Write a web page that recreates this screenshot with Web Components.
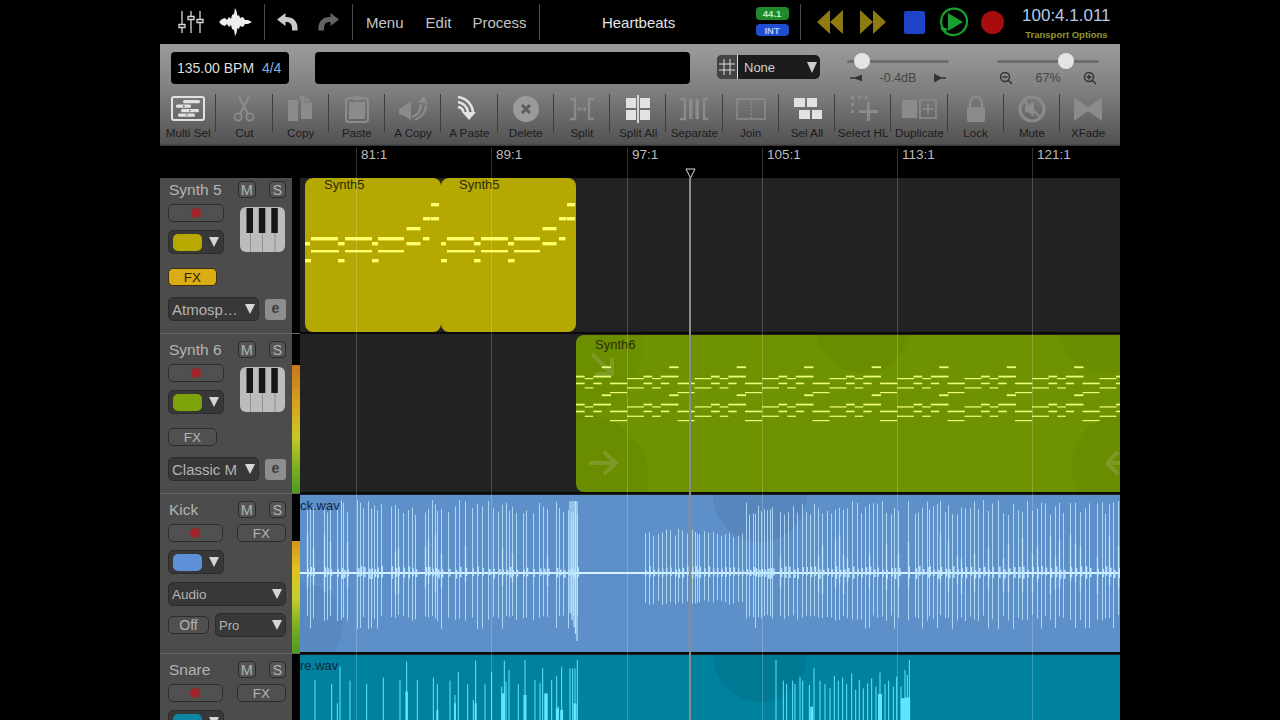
<!DOCTYPE html>
<html>
<head>
<meta charset="utf-8">
<title>Heartbeats</title>
<style>
  html, body { margin: 0; background: #000; height: 720px; overflow: hidden; }
  body { font-family: "Liberation Sans", Arial, sans-serif; }
</style>
</head>
<body>
<daw-app></daw-app>
<script>
// --- icons ---
const ICONS = {
  multi: `<rect x="4" y="2" width="32" height="23" rx="2" fill="none" stroke="currentColor" stroke-width="2"/><rect x="15" y="5" width="17" height="3.200" rx="1.500" fill="currentColor"/><rect x="8" y="9.500" width="15" height="3.200" rx="1.500" fill="currentColor"/><rect x="13" y="14" width="18" height="3.200" rx="1.500" fill="currentColor"/><rect x="10" y="18.500" width="17" height="3.200" rx="1.500" fill="currentColor"/><path d="M15 10.500h1.500v1.200H15zM21 15h1.500v1.200H21zM18 19.500h1.500v1.200H18z" fill="#555"/>`,
  cut: `<path d="M15 2l9 17M25 2l-9 17" stroke="currentColor" stroke-width="2.200" fill="none"/><circle cx="14" cy="22" r="3.600" fill="none" stroke="currentColor" stroke-width="1.800"/><circle cx="26" cy="22" r="3.600" fill="none" stroke="currentColor" stroke-width="1.800"/>`,
  copy: `<path d="M7 5h10v21H7z" fill="currentColor"/><path d="M18 1h6l7 6v17H20V5l-2-2z" fill="currentColor"/><path d="M24 1v6h7" fill="none" stroke="#777" stroke-width="1"/>`,
  paste: `<rect x="9" y="3" width="22" height="24" rx="3" fill="none" stroke="currentColor" stroke-width="2"/><rect x="12" y="7" width="16" height="17" fill="currentColor"/><rect x="16" y="1" width="8" height="4" rx="1" fill="currentColor"/>`,
  acopy: `<path d="M6 14l6-4 6-4v19l-6-4-6-2z" fill="currentColor"/><path d="M19 22c6-2 9-7 9-13M22 25c7-3 11-9 11-15" fill="none" stroke="currentColor" stroke-width="2.400"/><path d="M25 7l6-6 4 8z" fill="currentColor"/>`,
  apaste: `<path d="M9 2c8 1 14 7 15 15M9 7c5 1 9 4 10 10M9 12c3 .5 5 2 5.500 5" fill="none" stroke="currentColor" stroke-width="2.600"/><path d="M13 17h14l-7 8z" fill="currentColor"/>`,
  del: `<circle cx="20" cy="14" r="13" fill="currentColor"/><path d="M16 10l8 8M24 10l-8 8" stroke="#5c5c5c" stroke-width="3"/>`,
  split: `<path d="M8 4h5v20H8M32 4h-5v20h5" fill="none" stroke="currentColor" stroke-width="2.400"/><path d="M16 14h8M16 14l2-2M16 14l2 2M24 14l-2-2M24 14l-2 2" stroke="currentColor" stroke-width="1.200" fill="none"/>`,
  splitall: `<rect x="8" y="3" width="10" height="10" fill="currentColor"/><rect x="22" y="3" width="10" height="10" fill="currentColor"/><rect x="8" y="15" width="10" height="10" fill="currentColor"/><rect x="22" y="15" width="10" height="10" fill="currentColor"/><rect x="19.200" y="0" width="1.600" height="28" fill="#f0f0f0"/>`,
  separate: `<path d="M6 4h5v20H6M34 4h-4v20h4" fill="none" stroke="currentColor" stroke-width="2.400"/><rect x="15" y="4" width="3.500" height="20" fill="currentColor"/><rect x="21.500" y="4" width="3.500" height="20" fill="currentColor"/>`,
  join: `<rect x="6" y="4" width="28" height="20" fill="none" stroke="currentColor" stroke-width="1.600"/><path d="M20 4v20" stroke="currentColor" stroke-width="1.600" stroke-dasharray="2 1.500"/>`,
  selall: `<rect x="7" y="3" width="11" height="9" fill="currentColor"/><rect x="20" y="3" width="10" height="9" fill="currentColor"/><rect x="12" y="15" width="11" height="9" fill="currentColor"/><rect x="25" y="15" width="10" height="9" fill="currentColor"/>`,
  selhl: `<path d="M8 1h3v3H8zM15 1h3v3h-3zM22 1h3v3h-3zM8 8h3v3H8zM8 15h3v3H8z" fill="currentColor"/><path d="M24 7h3v8h8v3h-8v8h-3v-8h-8v-3h8z" fill="currentColor"/>`,
  dup: `<rect x="3" y="5" width="15" height="18" fill="currentColor"/><rect x="21" y="5" width="16" height="18" fill="none" stroke="currentColor" stroke-width="1.600"/><path d="M29 9v10M24 14h10" stroke="currentColor" stroke-width="1.600"/>`,
  lock: `<rect x="11" y="12" width="18" height="15" rx="2" fill="currentColor"/><path d="M14 13V8a6 6 0 0 1 12 0v5" fill="none" stroke="currentColor" stroke-width="2.400"/>`,
  mute: `<circle cx="20" cy="14" r="12" fill="none" stroke="currentColor" stroke-width="3.200"/><path d="M13 11h3l6-5v16l-6-5h-3z" fill="currentColor"/><path d="M12 6l16 16" stroke="currentColor" stroke-width="2.400"/>`,
  xfade: `<path d="M6 2l14 10 14-10v24L20 16 6 26z" fill="currentColor"/>`
};

// --- midi note patterns: [x, y, width, height] inside the clip ---
const synth5 = [];
[[0,5],[33,6.500],[67,6],[101.500,14]].forEach(n => synth5.push([n[0], 64, n[1], 3.400]));
[[6,27],[40,27],[73,26],[118,6.500]].forEach(n => synth5.push([n[0], 59, n[1], 3.400]));
[[6,28],[40,27],[73,26]].forEach(n => synth5.push([n[0], 72, n[1], 2.400]));
[[0,6],[33,6.500],[67,6.500]].forEach(n => synth5.push([n[0], 81, n[1], 3.400]));
synth5.push([101.500, 49, 14, 3.400], [118, 39, 7.500, 3.400], [126, 39, 8, 3.400], [126, 25, 8, 3.400]);

const synth6 = [];
const s6rows = [
  [109, 95, 123, 1.800], [137, 18, 44, 1.800], [137, 70, 123, 1.800], [144, 44, 70, 1.200], [144, 171, 222, 1.200],
  [158, 18, 44, 1.600], [158, 70, 95, 1.600], [158, 120, 172, 1.600], [172, 44, 70, 1.200], [172, 171, 222, 1.200],
  [186, 120, 171, 1.200], [193, 95, 123, 1.800], [221, 18, 44, 1.800], [221, 70, 123, 1.800], [229, 44, 70, 1.200],
  [229, 171, 222, 1.200], [242, 18, 44, 1.600], [242, 70, 95, 1.600], [242, 120, 172, 1.600], [257, 44, 70, 1.200],
  [257, 171, 222, 1.200], [270, 120, 171, 1.200]
];
for (let p = 0; p < 9; p++) {
  s6rows.forEach(r => synth6.push([(r[1] - 18) / 3 + p * 67.5, r[0] / 3 - 5, (r[2] - r[1]) / 3, r[3]]));
}
const PATTERNS = { synth5, synth6 };

// --- waveform data, spike positions read off the picture ---
const rnd = i => { const v = Math.sin(i * 12.9898) * 43758.5453; return v - Math.floor(v); };
const kickTall = [20,30,38,72,80,90,110,122,130,140,172,180,190,205,212,222,230,242,272,285,293,308,323,335,345,375,385,395,405,412,423,445,465,478,495,515,530,545,565,578,595,605,618,628,635,648,668,678,698,718,730,742,768,778,790,805,812,820,830].map(z => 300 + z / 3);
const kickShort = [1035,1047,1060,1073,1085,1097,1110,1125,1135,1147,1160,1175,1190].map(z => 300 + z / 3)
  .concat([15,28,42,55,68,80,93,105,118,130,143,155].map(z => 690 + z / 3));
const kickRight = [168,178,188,195,205,213,222,232,240,247,270,283,295,310,320,335,347,360,372,385,397,410,422,435,447,460,472,487,500,512,525,537,550,560,575,587,602,612,625,653,675,685,697,710,716,728,742,750,765,775,787,800,812,825,840,852,865,880,893,905,925,940,955,970,985,997,1010,1025,1040,1052,1065,1080,1095,1108,1120,1140,1155,1170,1185,1198,1220,1235,1245,1258,1270,1285].map(z => 690 + z / 3);

function kickLines() {
  const cy = 78, out = [];
  const add = (x, up, down, w, o) => out.push(`<line x1="${x - 300}" x2="${x - 300}" y1="${cy - up}" y2="${cy + down}" stroke-width="${w}" opacity="${o}"/>`);
  kickTall.concat(kickRight).forEach((x, i) => {
    const big = rnd(i) > 0.8;
    add(Math.round(x) + .5, 58 + rnd(i + 3) * 15, big ? 50 + rnd(i) * 6 : 42 + rnd(i + 7) * 6, 1, .8);
    if (rnd(i + 11) > .7) add(Math.round(x) + .5, 14 + rnd(i + 13) * 26, 8 + rnd(i + 17) * 14, 1.300, 1);
    add(x + 1.500, 3 + rnd(i + 19) * 4, 2 + rnd(i + 23) * 4, 1.500, 1);
  });
  kickShort.forEach((x, i) => {
    add(Math.round(x) + .5, 36 + rnd(i + 5) * 8, 27 + rnd(i + 9) * 5, 1, .8);
    add(x + 1, 3 + rnd(i) * 4, 2 + rnd(i + 2) * 3, 1.500, 1);
  });
  [570, 572, 574, 575.500, 577].forEach((x, i) => add(x, 72, 40 + i * 7, 1.200, .95));
  return out.join('');
}

const snareLeft = [[45,570],[95,582],[112,640],[120,530],[150,572],[200,582],[250,563],[300,570],[320,515],[352,570],[400,563],[412,583],[450,572],[465,615],[475,545],[503,583],[520,630],[527,512],[555,583],[575,545],[605,590],[613,512],[618,575],[627,540],[655,583],[675,510],[705,570],[720,580],[728,535],[755,570],[770,558],[775,650],[785,530],[810,535],[818,535],[825,535],[832,510]];
const snareRight = [[258,510],[280,572],[290,582],[308,572],[315,582],[330,560],[338,572],[358,585],[372,535],[390,572],[405,582],[420,595],[433,558],[445,572],[458,563],[470,582],[485,550],[497,600],[508,570],[520,595],[533,580],[545,565],[558,590],[570,547],[585,582],[596,572],[610,590],[620,560],[633,590],[645,540],[652,555],[658,510]];
const snareThick = [[320,605,0,2.500],[412,660,0,2],[465,640,0,2],[527,640,0,2],[610,610,0,3],[675,615,0,3],[738,610,0,3.500],[772,655,0,3],[785,660,0,3],[825,640,0,3],[365,650,1,3],[570,612,1,4],[637,625,1,3],[645,625,1,6],[653,622,1,5]];

function snareLines() {
  const out = [];
  const y = zy => 490 + zy / 3 - 655;
  snareLeft.forEach(s => out.push(`<line x1="${s[0] / 3}" x2="${s[0] / 3}" y1="${y(s[1])}" y2="80" stroke-width="1"/>`));
  snareRight.forEach(s => { const x = 390 + s[0] / 3; out.push(`<line x1="${x}" x2="${x}" y1="${y(s[1])}" y2="80" stroke-width="1"/>`); });
  snareThick.forEach(s => { const x = s[2] ? 390 + s[0] / 3 : s[0] / 3; out.push(`<line x1="${x}" x2="${x}" y1="${y(s[1])}" y2="80" stroke-width="${s[3]}"/>`); });
  return out.join('');
}

// --- components ---
class TopBar extends HTMLElement {
  connectedCallback() {
    this.attachShadow({ mode: 'open' });
    this.shadowRoot.innerHTML = `
      <style>
        :host { display: flex; align-items: center; height: 44px; background: #000; color: #c4c4c4; font-size: 15px; padding-left: 18px; box-sizing: border-box; }
        svg { display: block; flex: none; }
        .sep { width: 1px; height: 36px; background: #4a4a4a; flex: none; }
        .menu { flex: none; }
        .title { width: 200px; text-align: center; color: #e2e2e2; flex: none; margin-left: -1px; }
        .badges { display: flex; flex-direction: column; gap: 4px; margin: -1px 0 0 17px; flex: none; }
        .badge { width: 33px; height: 12.500px; border-radius: 4px; font-size: 9.500px; font-weight: bold; text-align: center; line-height: 13px; }
        .sr { background: #1e8a2c; color: #bfe8c0; }
        .int { background: #1f4fd0; color: #b8c8f0; }
        .time { margin-left: 15px; display: flex; flex-direction: column; align-items: flex-end; width: 92px; flex: none; margin-top: 1px; }
        .clock { font-size: 17px; color: #b4cbe6; line-height: 19px; white-space: nowrap; }
        .opts { font-size: 9.500px; font-weight: bold; color: #94962c; margin-top: 4px; white-space: nowrap; margin-right: 3px; }
      </style>
      <svg width="26" height="24" viewBox="0 0 26 24" fill="none" stroke="#d8d8d8" stroke-width="1.300">
        <path d="M4 1v22M13 1v22M22 1v22"/>
        <path d="M1 14.500h6v3H1zM10 6.500h6v3h-6zM19 9.500h6v3h-6z" fill="#000"/>
      </svg>
      <svg style="margin-left:15px" width="33" height="30" viewBox="0 0 33 30">
        <path d="M0 15 L3 12 L6 11 L8 13 L10 10 L12 12 L13 8 L15 7 L16 1 L17.500 4 L18.500 9 L20 8 L21 11 L24 10 L26 13 L29 13 L33 15 L29 17 L26 17 L24 20 L21 19 L20 22 L18.500 21 L17.500 26 L16 29 L15 23 L13 22 L12 18 L10 20 L8 17 L6 19 L3 18Z" fill="#eee"/>
      </svg>
      <div class="sep" style="margin-left:12px"></div>
      <svg style="margin-left:12px" width="21" height="18" viewBox="0 0 21 18"><path d="M8.500 0 L0 6.500 L8.500 13 V9 C13 8.500 15.500 11 15 17.500 H20.500 C21.500 8 15.500 3.500 8.500 4Z" fill="#c8c8c8"/></svg>
      <svg style="margin-left:20px" width="21" height="18" viewBox="0 0 21 18"><path d="M12.500 0 L21 6.500 L12.500 13 V9 C8 8.500 5.500 11 6 17.500 H.5 C-.5 8 5.500 3.500 12.500 4Z" fill="#636363"/></svg>
      <div class="sep" style="margin-left:13px"></div>
      <div class="menu" style="margin-left:13px">Menu</div>
      <div class="menu" style="margin-left:22px">Edit</div>
      <div class="menu" style="margin-left:21px">Process</div>
      <div class="sep" style="margin-left:12px"></div>
      <div class="title">Heartbeats</div>
      <div class="badges"><div class="badge sr">44.1</div><div class="badge int">INT</div></div>
      <div class="sep" style="margin-left:11px"></div>
      <svg style="margin-left:16px" width="26" height="24" viewBox="0 0 26 24" fill="#8f7a12"><path d="M13 0v24L0 12zM26 0v24L13 12z"/></svg>
      <svg style="margin-left:17px" width="26" height="24" viewBox="0 0 26 24" fill="#8f7a12"><path d="M0 0v24l13-12zM13 0v24l13-12z"/></svg>
      <div style="margin-left:18px;width:21px;height:23px;background:#1d44c6;border-radius:2px;flex:none"></div>
      <svg style="margin-left:12px" width="33" height="32" viewBox="0 0 33 32">
        <path d="M7 24A13.500 13.500 0 0 1 6 8.500 A13.500 13.500 0 0 1 27 7 A13.500 13.500 0 0 1 25 26 A13.500 13.500 0 0 1 9 27" fill="none" stroke="#17a02f" stroke-width="2.200"/>
        <path d="M11 7l15 9-15 9z" fill="#17a02f"/><path d="M3 22l7 0-1 7z" fill="#17a02f"/>
      </svg>
      <div style="margin-left:11px;width:23px;height:23px;background:#a80c0c;border-radius:50%;flex:none"></div>
      <div class="time"><div class="clock">100:4.1.011</div><div class="opts">Transport Options</div></div>
    `;
  }
}
customElements.define('top-bar', TopBar);

class ToolButton extends HTMLElement {
  connectedCallback() {
    this.attachShadow({ mode: 'open' });
    const on = this.hasAttribute('on');
    this.shadowRoot.innerHTML = `
      <style>
        :host { display: flex; flex-direction: column; align-items: center; position: relative; height: 50px; font-size: 11.700px; color: #1c1c1c; white-space: nowrap; }
        :host(:not(:last-child))::after { content: ''; position: absolute; right: 0; top: 0; height: 38px; width: 1px; background: #3d3d3d; }
        svg { display: block; color: ${on ? '#e2e2e2' : (this.getAttribute('tint') || '#8b8b8b')}; margin-top: 1px; }
        .label { margin-top: 2.500px; line-height: 14px; }
      </style>
      <svg width="40" height="28" viewBox="0 0 40 28">${ICONS[this.getAttribute('icon')]}</svg>
      <div class="label">${this.getAttribute('label')}</div>
    `;
  }
}
customElements.define('tool-button', ToolButton);

class LevelSlider extends HTMLElement {
  connectedCallback() {
    this.attachShadow({ mode: 'open' });
    this.shadowRoot.innerHTML = `
      <style>
        :host { display: flex; flex-direction: column; width: 102px; flex: none; font-size: 12.500px; color: #444; }
        .track { height: 18px; display: flex; align-items: center; position: relative; }
        .line { height: 3px; background: #6e6e6e; width: 100%; border-radius: 2px; }
        .knob { position: absolute; top: 1px; width: 16px; height: 16px; border-radius: 50%; background: #e4e4e4; left: ${this.getAttribute('pos')}px; }
        .info { display: flex; justify-content: space-between; align-items: center; height: 16px; padding: 0 ${this.getAttribute('pad') || 3}px; }
      </style>
      <div class="track"><div class="line"></div><div class="knob"></div></div>
      <div class="info"><slot name="a"></slot><span>${this.getAttribute('value')}</span><slot name="b"></slot></div>
    `;
  }
}
customElements.define('level-slider', LevelSlider);

class ToolBar extends HTMLElement {
  connectedCallback() {
    this.attachShadow({ mode: 'open' });
    this.shadowRoot.innerHTML = `
      <style>
        :host { display: block; height: 102px; background: linear-gradient(#9c9c9c, #7d7d7d 48%, #525252 98%, #2e2e2e); box-sizing: border-box; }
        .row { display: flex; align-items: flex-start; height: 50px; padding: 8px 0 0 11px; box-sizing: border-box; }
        .bpm { width: 118px; height: 32px; background: #000; border-radius: 4px; color: #ddd; font-size: 14px; line-height: 33px; padding-left: 6px; box-sizing: border-box; white-space: nowrap; flex: none; }
        .bpm span { color: #84b0e0; margin-left: 4px; }
        .msg { width: 375px; height: 32px; background: #000; border-radius: 4px; margin-left: 26px; flex: none; }
        .grid { display: flex; width: 103px; height: 24px; margin: 3px 0 0 27px; border-radius: 5px; overflow: hidden; background: #1c1c1c; flex: none; }
        .grid .g { width: 20px; background: #444; border-right: 1px solid #ddd; display: flex; align-items: center; justify-content: center; }
        .grid .v { flex: 1; color: #d0d0d0; font-size: 13px; line-height: 25px; padding-left: 6px; }
        .arrow { width: 0; height: 0; border-left: 5px solid transparent; border-right: 5px solid transparent; border-top: 11px solid #ccc; margin: 7px 3px 0 0; }
        .tools { display: grid; grid-template-columns: repeat(17, 56.250px); }
      </style>
      <div class="row">
        <div class="bpm">135.00 BPM <span>4/4</span></div>
        <div class="msg"></div>
        <div class="grid">
          <div class="g"><svg width="16" height="16" viewBox="0 0 16 16" stroke="#ddd" stroke-width="1"><path d="M5 0v16M11 0v16M0 5h16M0 11h16"/></svg></div>
          <div class="v">None</div><div class="arrow"></div>
        </div>
        <level-slider style="margin-left:27px" pos="7" value="-0.4dB" pad="3">
          <svg slot="a" width="14" height="10" viewBox="0 0 14 10" fill="#333"><path d="M0 4.200h5l7-2.500v6.600l-7-2.500H0z"/></svg>
          <svg slot="b" width="14" height="10" viewBox="0 0 14 10" fill="#333"><path d="M14 4.200H9L2 .5v9l7-3.700h5z"/></svg>
        </level-slider>
        <level-slider style="margin-left:48px" pos="61" value="67%" pad="2">
          <svg slot="a" width="14" height="14" viewBox="0 0 14 14" fill="none" stroke="#333" stroke-width="1.500"><circle cx="6" cy="6" r="4.500"/><path d="M3.500 6h5M9.500 9.500L13 13"/></svg>
          <svg slot="b" width="14" height="14" viewBox="0 0 14 14" fill="none" stroke="#333" stroke-width="1.500"><circle cx="6" cy="6" r="4.500"/><path d="M3.500 6h5M6 3.500v5M9.500 9.500L13 13"/></svg>
        </level-slider>
      </div>
      <div class="tools"><slot></slot></div>
    `;
  }
}
customElements.define('tool-bar', ToolBar);

class RulerBar extends HTMLElement {
  connectedCallback() {
    this.attachShadow({ mode: 'open' });
    const marks = [['81:1', 196], ['89:1', 331], ['97:1', 467], ['105:1', 602], ['113:1', 737], ['121:1', 872]];
    this.shadowRoot.innerHTML = `
      <style>
        :host { display: block; height: 32px; background: #000; position: relative; color: #bdbdbd; font-size: 13.500px; }
        span { position: absolute; top: 1px; line-height: 16px; }
      </style>
      ${marks.map(m => `<span style="left:${m[1] + 5}px">${m[0]}</span>`).join('')}
    `;
  }
}
customElements.define('ruler-bar', RulerBar);

class TrackHead extends HTMLElement {
  connectedCallback() {
    this.attachShadow({ mode: 'open' });
    const name = this.getAttribute('name'), color = this.getAttribute('color'), patch = this.getAttribute('patch');
    const audio = this.hasAttribute('audio');
    const rec = `<div class="btn rec"><i></i></div>`;
    const swatch = `<div class="drop color"><b style="background:${color}"></b><div class="arrow"></div></div>`;
    const piano = `<svg class="piano" width="45" height="45" viewBox="0 0 45 45"><rect width="45" height="45" rx="6" fill="#bcbcbc"/><path d="M10.500 26v19M22.500 26v19M35 26v19" stroke="#8f8f8f"/><rect x="6.500" y="1" width="6.500" height="25" fill="#161616"/><rect x="18.800" y="1" width="6.500" height="25" fill="#161616"/><rect x="31.300" y="1" width="6.500" height="25" fill="#161616"/></svg>`;
    // the last track runs off the bottom of the screen, its lower rows are never seen
    const lower = this.hasAttribute('cut') ? '' : `
      <div class="drop patch full" style="margin-top:8px"><span>${patch}</span><div class="arrow"></div></div>
      <div class="flex" style="margin-top:7px;align-items:center">
        <div class="btn off">Off</div>
        <div class="drop pro"><span>Pro</span><div class="arrow"></div></div>
      </div>`;
    const body = audio ? `
      <div class="flex" style="margin-top:6px">${rec}<div class="btn fx wide" style="margin-left:14px">FX</div></div>
      <div class="flex" style="margin-top:8px">${swatch}</div>
      ${lower}` : `
      <div class="flex" style="margin-top:6px">
        <div class="col">${rec}<div style="margin-top:8px">${swatch}</div></div>
        <div style="margin:3px 0 0 16px">${piano}</div>
      </div>
      <div class="btn fx ${this.hasAttribute('fx-on') ? 'on' : ''}" style="margin-top:12px">FX</div>
      <div class="flex" style="margin-top:11px;align-items:center">
        <div class="drop patch"><span>${patch}</span><div class="arrow"></div></div>
        <div class="e">e</div>
      </div>`;
    this.shadowRoot.innerHTML = `
      <style>
        :host { display: block; box-sizing: border-box; height: 160px; padding: 7px 6px 0 8px; background: #4c4c4c; border-bottom: 1px solid #666; color: #b4b4b4; overflow: hidden; }
        .flex { display: flex; }
        .col { display: flex; flex-direction: column; }
        .top { display: flex; align-items: center; height: 17px; }
        .name { font-size: 15.500px; flex: 1; margin-left: 1px; white-space: nowrap; }
        .ms { box-sizing: border-box; width: 17.500px; height: 17.500px; border: 1px solid #2a2a2a; border-radius: 4px; background: #555; font-size: 14.500px; text-align: center; line-height: 16px; margin-left: 13px; }
        .ms:first-of-type { margin-left: 0; }
        .btn { box-sizing: border-box; border: 1px solid #2c2c2c; border-radius: 5px; background: #505050; font-size: 13.500px; text-align: center; }
        .rec { width: 56px; height: 18px; display: flex; align-items: center; justify-content: center; }
        .rec i { width: 10px; height: 10px; border-radius: 50%; background: #a12428; }
        .fx { width: 49px; height: 18px; line-height: 17px; }
        .fx.wide { width: 50px; }
        .fx.on { background: #dcac14; color: #2a2410; border-color: #3a3010; }
        .drop { box-sizing: border-box; display: flex; align-items: center; background: #383838; border: 1px solid #2c2c2c; border-radius: 5px; }
        .color { width: 56px; height: 24px; padding-left: 4px; }
        .color b { display: block; width: 29px; height: 17px; border-radius: 5px; }
        .color .arrow { margin-left: 7px; }
        .patch { width: 91px; height: 24px; padding-left: 3px; font-size: 15px; white-space: nowrap; }
        .patch span { flex: 1; overflow: hidden; }
        .patch.full { width: 118px; font-size: 13.500px; }
        .arrow { width: 0; height: 0; border-left: 5px solid transparent; border-right: 5px solid transparent; border-top: 10px solid #d6d6d6; margin-right: 3px; flex: none; }
        .e { box-sizing: border-box; width: 21px; height: 21px; margin-left: 6px; border-radius: 3px; background: #8d8d8d; color: #3e3e3e; font-size: 14px; font-weight: bold; text-align: center; line-height: 19px; }
        .off { width: 41px; height: 18px; line-height: 17px; font-size: 14px; }
        .pro { width: 71px; height: 24px; margin-left: 6px; padding-left: 3px; font-size: 13px; }
        .pro span { flex: 1; }
      </style>
      <div class="top"><div class="name">${name}</div><div class="ms">M</div><div class="ms">S</div></div>
      ${body}
    `;
  }
}
customElements.define('track-head', TrackHead);

class TrackMeter extends HTMLElement {
  connectedCallback() {
    this.attachShadow({ mode: 'open' });
    const top = this.getAttribute('level');
    this.shadowRoot.innerHTML = `
      <style>
        :host { display: block; height: 160px; background: #000; box-sizing: border-box; padding-bottom: 1px; position: relative; }
        .fill { position: absolute; left: 0; right: 0; bottom: 1px; top: ${top}px; background: linear-gradient(${this.getAttribute('grad')}); }
        .end { position: absolute; left: 0; right: 0; bottom: 0; height: 1px; background: #666; }
      </style>
      ${top ? '<div class="fill"></div>' : ''}<div class="end"></div>
    `;
  }
}
customElements.define('track-meter', TrackMeter);

class TrackLane extends HTMLElement {
  connectedCallback() {
    this.attachShadow({ mode: 'open' });
    this.shadowRoot.innerHTML = `
      <style>
        :host { display: block; height: 160px; background: #222; position: relative; overflow: hidden; box-shadow: inset 0 -2px 0 #0a0a0a; }
      </style>
      <slot></slot>
    `;
  }
}
customElements.define('track-lane', TrackLane);

class MidiClip extends HTMLElement {
  connectedCallback() {
    this.attachShadow({ mode: 'open' });
    const notes = PATTERNS[this.getAttribute('pattern')];
    this.shadowRoot.innerHTML = `
      <style>
        :host { position: absolute; left: ${this.getAttribute('x')}px; width: ${this.getAttribute('w')}px; top: ${this.getAttribute('y')}px; bottom: 2px; background: ${this.getAttribute('color')}; border-radius: 8px; overflow: hidden; }
        .name { position: absolute; left: ${this.getAttribute('name-x')}px; top: ${this.getAttribute('name-y')}px; font-size: 13px; line-height: 14px; color: #2c2c0a; }
        svg { position: absolute; left: 0; top: 0; }
      </style>
      <slot></slot>
      <svg width="${this.getAttribute('w')}" height="160">${notes.map(n => `<rect x="${n[0]}" y="${n[1]}" width="${n[2]}" height="${n[3]}" fill="${this.getAttribute('note')}"/>`).join('')}</svg>
      <div class="name">${this.getAttribute('name')}</div>
    `;
  }
}
customElements.define('midi-clip', MidiClip);

class WaveClip extends HTMLElement {
  connectedCallback() {
    this.attachShadow({ mode: 'open' });
    const kick = this.getAttribute('wave') === 'kick';
    this.shadowRoot.innerHTML = `
      <style>
        :host { position: absolute; left: 0; right: 0; top: 1px; bottom: 2px; background: ${this.getAttribute('color')}; overflow: hidden; }
        .name { position: absolute; left: 0; top: 4px; font-size: 13px; line-height: 14px; color: #12283c; }
        svg { position: absolute; left: 0; top: 0; }
      </style>
      <slot></slot>
      <svg width="820" height="157" stroke="${this.getAttribute('line')}" stroke-linecap="butt">
        ${kick ? '<line x1="0" x2="820" y1="78" y2="78" stroke-width="2.200" stroke="#d4f2ff"/>' + kickLines() : snareLines()}
      </svg>
      <div class="name">${this.getAttribute('name')}</div>
    `;
  }
}
customElements.define('wave-clip', WaveClip);

// faint round shapes that sit behind the clip contents
class ClipBlob extends HTMLElement {
  connectedCallback() {
    this.attachShadow({ mode: 'open' });
    const r = +this.getAttribute('r');
    this.shadowRoot.innerHTML = `
      <style>
        :host { position: absolute; left: ${this.getAttribute('x') - r}px; top: ${this.getAttribute('y') - r}px; width: ${2 * r}px; height: ${2 * r}px; border-radius: 50%; background: ${this.getAttribute('tint') || 'rgba(0,0,0,.04)'}; }
      </style>`;
  }
}
customElements.define('clip-blob', ClipBlob);

class ClipArrow extends HTMLElement {
  connectedCallback() {
    this.attachShadow({ mode: 'open' });
    this.shadowRoot.innerHTML = `
      <style>:host { position: absolute; left: ${this.getAttribute('x')}px; top: ${this.getAttribute('y')}px; width: 32px; height: 28px; }</style>
      <svg width="32" height="28" viewBox="0 0 32 28" fill="none" stroke="#a3b36a" stroke-opacity=".35" stroke-width="4">
        <path d="${this.getAttribute('d')}"/>
      </svg>`;
  }
}
customElements.define('clip-arrow', ClipArrow);

class TrackRow extends HTMLElement {
  connectedCallback() {
    this.attachShadow({ mode: 'open' });
    this.shadowRoot.innerHTML = `
      <style>
        :host { display: grid; grid-template-columns: 132px 8px 820px; height: 160px; }
      </style>
      <slot name="head"></slot><slot name="meter"></slot><slot name="lane"></slot>
    `;
  }
}
customElements.define('track-row', TrackRow);

class DawApp extends HTMLElement {
  connectedCallback() {
    this.attachShadow({ mode: 'open' });
    const gridX = [196, 331, 467, 602, 737, 872];
    const tools = [
      ['multi', 'Multi Sel', 1], ['cut', 'Cut'], ['copy', 'Copy'], ['paste', 'Paste'], ['acopy', 'A Copy'], ['apaste', 'A Paste', 1],
      ['del', 'Delete', 0, '#9a9a9a'], ['split', 'Split'], ['splitall', 'Split All', 1], ['separate', 'Separate'], ['join', 'Join'],
      ['selall', 'Sel All', 1], ['selhl', 'Select HL'], ['dup', 'Duplicate'], ['lock', 'Lock'], ['mute', 'Mute'], ['xfade', 'XFade']
    ];
    this.shadowRoot.innerHTML = `
      <style>
        :host { display: block; width: 960px; height: 720px; margin: 0 auto; position: relative; overflow: hidden; background: #000; font-family: "Liberation Sans", Arial, sans-serif; }
        .tracks { height: 542px; overflow: hidden; }
        .tracks track-row:first-child { margin-top: -4px; }
        .grid { position: absolute; top: 148px; bottom: 0; width: 1px; background: rgba(255,255,255,.2); pointer-events: none; }
        .play { position: absolute; left: 529px; top: 178px; bottom: 0; width: 2px; background: #8c8c8c; }
        .head { position: absolute; left: 525px; top: 168px; }
      </style>
      <top-bar></top-bar>
      <tool-bar>
        ${tools.map(t => `<tool-button icon="${t[0]}" label="${t[1]}" ${t[2] ? 'on' : ''} ${t[3] ? `tint="${t[3]}"` : ''}></tool-button>`).join('')}
      </tool-bar>
      <ruler-bar></ruler-bar>
      <div class="tracks">
        <track-row>
          <track-head slot="head" name="Synth 5" color="#b8a900" patch="Atmosp…" fx-on></track-head>
          <track-meter slot="meter"></track-meter>
          <track-lane slot="lane">
            <midi-clip x="5" w="136" y="4" color="#b5a800" note="#ffff6a" pattern="synth5" name="Synth5" name-x="19" name-y="0"></midi-clip>
            <midi-clip x="141" w="135" y="4" color="#b5a800" note="#ffff6a" pattern="synth5" name="Synth5" name-x="18" name-y="0"></midi-clip>
          </track-lane>
        </track-row>
        <track-row>
          <track-head slot="head" name="Synth 6" color="#7da30a" patch="Classic M"></track-head>
          <track-meter slot="meter" level="31" grad="#c9761c, #d6a81e 35%, #c9c82a 55%, #7fae20 80%, #4f9a20"></track-meter>
          <track-lane slot="lane">
            <midi-clip x="276" w="560" y="1" color="#6f9300" note="#ecff78" pattern="synth6" name="Synth6" name-x="19" name-y="3">
              <clip-blob x="7" y="145" r="66"></clip-blob>
              <clip-blob x="-8" y="10" r="75" tint="rgba(0,0,0,.025)"></clip-blob>
              <clip-blob x="287" y="-10" r="48"></clip-blob>
              <clip-blob x="530" y="-10" r="48"></clip-blob>
              <clip-blob x="545" y="130" r="50"></clip-blob>
              <clip-arrow x="12" y="15" d="M4 4 L24 24 M24 8 V24 H8"></clip-arrow>
              <clip-arrow x="12" y="114" d="M1 14 H28 M16 3 L28 14 L16 25"></clip-arrow>
              <clip-arrow x="530" y="114" d="M28 14 H1 M12 3 L1 14 L12 25"></clip-arrow>
            </midi-clip>
          </track-lane>
        </track-row>
        <track-row>
          <track-head slot="head" name="Kick" color="#5d90d6" patch="Audio" audio></track-head>
          <track-meter slot="meter" level="47" grad="#d8941c, #e0c020 25%, #c8d030 50%, #7fae20 75%, #4f9a20"></track-meter>
          <track-lane slot="lane">
            <wave-clip color="#5d8fc9" line="#c0e8ff" wave="kick" name="ck.wav">
              <clip-blob x="460" y="0" r="47" tint="rgba(0,0,0,.06)"></clip-blob>
              <clip-blob x="0" y="130" r="43"></clip-blob>
            </wave-clip>
          </track-lane>
        </track-row>
        <track-row>
          <track-head slot="head" name="Snare" color="#0d86a4" patch="Audio" audio cut></track-head>
          <track-meter slot="meter"></track-meter>
          <track-lane slot="lane">
            <wave-clip color="#00829e" line="#5fe6ff" wave="snare" name="re.wav">
              <clip-blob x="460" y="0" r="47" tint="rgba(0,0,0,.06)"></clip-blob>
            </wave-clip>
          </track-lane>
        </track-row>
      </div>
      ${gridX.map(x => `<div class="grid" style="left:${x}px"></div>`).join('')}
      <div class="play"></div>
      <svg class="head" width="11" height="11" viewBox="0 0 11 11"><path d="M1 1h9L5.500 10z" fill="#000" stroke="#ddd"/></svg>
    `;
  }
}
customElements.define('daw-app', DawApp);
</script>
</body>
</html>
